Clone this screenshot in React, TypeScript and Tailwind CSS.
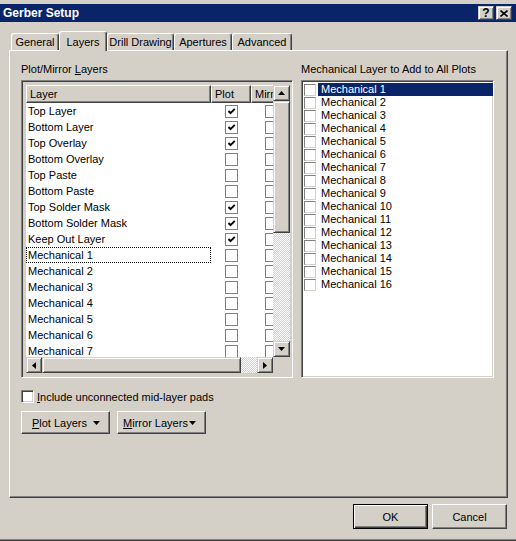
import React from "react";

// classic 3D bevels
const raised =
  "border border-t-white border-l-white border-r-[#404040] border-b-[#404040] shadow-[inset_-1px_-1px_#808080]";
const sunken =
  "border border-t-[#808080] border-l-[#808080] border-r-white border-b-white shadow-[inset_1px_1px_#404040,inset_-1px_-1px_#d4d0c8]";
const scrollBtn =
  "border border-t-[#d4d0c8] border-l-[#d4d0c8] border-r-[#404040] border-b-[#404040] shadow-[inset_1px_1px_#ffffff,inset_-1px_-1px_#808080] bg-[#d4d0c8]";
const checker =
  "bg-[image:repeating-conic-gradient(#d4d0c8_0%_25%,#ffffff_0%_50%)] bg-[length:2px_2px]";

const TABS = [
  { label: "General", cls: "w-[48px]" },
  { label: "Layers", cls: "w-[48px]", active: true },
  { label: "Drill Drawing", cls: "w-[67px]" },
  { label: "Apertures", cls: "w-[58px]" },
  { label: "Advanced", cls: "w-[60px]" },
];

const LAYERS = [
  { name: "Top Layer", plot: true },
  { name: "Bottom Layer", plot: true },
  { name: "Top Overlay", plot: true },
  { name: "Bottom Overlay", plot: false },
  { name: "Top Paste", plot: false },
  { name: "Bottom Paste", plot: false },
  { name: "Top Solder Mask", plot: true },
  { name: "Bottom Solder Mask", plot: true },
  { name: "Keep Out Layer", plot: true },
  { name: "Mechanical 1", plot: false, focus: true },
  { name: "Mechanical 2", plot: false },
  { name: "Mechanical 3", plot: false },
  { name: "Mechanical 4", plot: false },
  { name: "Mechanical 5", plot: false },
  { name: "Mechanical 6", plot: false },
  { name: "Mechanical 7", plot: false },
];

const MECH = Array.from({ length: 16 }, (_, i) => i + 1);

type Dir = "up" | "down" | "left" | "right";

const Arrow = ({ dir }: { dir: Dir }) => {
  const pts = {
    up: "0,4 3.5,0 7,4",
    down: "0,0 3.5,4 7,0",
    left: "4,0 0,3.5 4,7",
    right: "0,0 4,3.5 0,7",
  }[dir];
  const vertical = dir === "up" || dir === "down";
  return (
    <svg width={vertical ? 7 : 4} height={vertical ? 4 : 7} className="block">
      <polygon points={pts} fill="#000" />
    </svg>
  );
};

const ListCheck = ({ checked }: { checked?: boolean }) => (
  <div className="w-[13px] h-[13px] shrink-0 border border-[#808080] bg-white flex items-center justify-center">
    {checked && (
      <svg width="9" height="9" viewBox="0 0 9 9" className="block">
        <path d="M1.5 4 L3.5 6.2 L7.8 1.8" stroke="#000" strokeWidth="1.9" fill="none" />
      </svg>
    )}
  </div>
);

const TitleButton = ({ children }: { children: React.ReactNode }) => (
  <div className={`w-[16px] h-[14px] flex items-center justify-center ${scrollBtn}`}>{children}</div>
);

const DropButton = ({ label, mnemonic }: { label: string; mnemonic: string }) => (
  <div className={`w-[89px] h-[23px] bg-[#d4d0c8] flex items-center ${raised}`}>
    <span className="flex-1 text-center pl-[4px]">
      <span className="underline underline-offset-[1px]">{mnemonic}</span>
      {label}
    </span>
    <div className="mr-[9px]">
      <Arrow dir="down" />
    </div>
  </div>
);

const LayerList = () => (
  <div className={`w-[272px] h-[298px] pl-[4px] pt-[4px] pr-[2px] pb-[4px] ${sunken}`}>
    <div className="w-full h-full flex flex-col bg-white">
      <div className="flex h-[272px]">
        <div className="w-[247px] overflow-hidden">
          <div className="flex h-[18px] w-[265px]">
            <div className={`w-[185px] shrink-0 flex items-center pl-[3px] bg-[#d4d0c8] ${raised}`}>Layer</div>
            <div className={`w-[40px] shrink-0 flex items-center pl-[3px] bg-[#d4d0c8] ${raised}`}>Plot</div>
            <div className={`w-[40px] shrink-0 flex items-center pl-[3px] bg-[#d4d0c8] ${raised}`}>Mirror</div>
          </div>
          {LAYERS.map((l) => (
            <div key={l.name} className="flex h-[16px] w-[265px]">
              <div
                className={`w-[185px] shrink-0 flex items-center ${
                  l.focus ? "border border-dotted border-black pl-[1px]" : "pl-[2px]"
                }`}
              >
                {l.name}
              </div>
              <div className="w-[40px] shrink-0 flex items-center justify-center">
                <ListCheck checked={l.plot} />
              </div>
              <div className="w-[40px] shrink-0 flex items-center justify-center">
                <ListCheck />
              </div>
            </div>
          ))}
        </div>
        <div className="w-[17px] flex flex-col">
          <div className={`h-[16px] flex items-center justify-center ${scrollBtn}`}>
            <Arrow dir="up" />
          </div>
          <div className={`h-[132px] ${scrollBtn}`} />
          <div className={`flex-1 ${checker}`} />
          <div className={`h-[16px] flex items-center justify-center ${scrollBtn}`}>
            <Arrow dir="down" />
          </div>
        </div>
      </div>
      <div className="flex h-[16px]">
        <div className={`w-[16px] flex items-center justify-center ${scrollBtn}`}>
          <Arrow dir="left" />
        </div>
        <div className={`w-[199px] ${scrollBtn}`} />
        <div className={`w-[16px] ${checker}`} />
        <div className={`w-[16px] flex items-center justify-center ${scrollBtn}`}>
          <Arrow dir="right" />
        </div>
        <div className="w-[17px] bg-[#d4d0c8]" />
      </div>
    </div>
  </div>
);

const MechList = () => (
  <div className={`w-[193px] h-[298px] bg-white pt-[2px] pl-[2px] ${sunken}`}>
    {MECH.map((n) => (
      <div key={n} className="flex items-center h-[13px]">
        <div className="w-[12px] h-[12px] shrink-0 bg-white border border-t-[#808080] border-l-[#808080] border-r-[#d4d0c8] border-b-[#d4d0c8]" />
        <div
          className={`ml-[2px] flex-1 h-full pl-[3px] leading-[13px] ${
            n === 1 ? "bg-[#0a246a] text-white" : ""
          }`}
        >
          Mechanical {n}
        </div>
      </div>
    ))}
  </div>
);

export default function App() {
  return (
    <div className="w-[516px] h-[541px] bg-[#d4d0c8] flex flex-col overflow-hidden text-[11px] leading-[14px] text-black font-['Liberation_Sans',Arial,sans-serif] select-none">
      <div className="h-[4px] shrink-0" />

      {/* title bar */}
      <div className="h-[18px] shrink-0 bg-[#0a246a] flex items-center justify-between pl-[3px] pr-[4px]">
        <span className="text-white font-bold text-[12px]">Gerber Setup</span>
        <div className="flex gap-[2px]">
          <TitleButton>
            <span className="font-bold text-[12px] leading-none">?</span>
          </TitleButton>
          <TitleButton>
            <svg width="8" height="7" viewBox="0 0 8 7" className="block">
              <path d="M0.5 0.5 L7.5 6.5 M7.5 0.5 L0.5 6.5" stroke="#000" strokeWidth="1.6" />
            </svg>
          </TitleButton>
        </div>
      </div>

      <div className="h-[9px] shrink-0" />

      {/* tabs */}
      <div className="h-[19px] shrink-0 flex items-end ml-[11px]">
        {TABS.map((t) =>
          t.active ? (
            <div
              key={t.label}
              className={`${t.cls} relative z-10 self-start h-[20px] bg-[#d4d0c8] rounded-t-[3px] border border-b-0 border-t-white border-l-white border-r-[#404040] shadow-[inset_-1px_0_#808080] flex items-center justify-center`}
            >
              {t.label}
            </div>
          ) : (
            <div
              key={t.label}
              className={`${t.cls} h-[17px] rounded-t-[3px] border border-b-0 border-t-white border-l-white border-r-[#404040] shadow-[inset_-1px_0_#808080] flex items-center justify-center`}
            >
              {t.label}
            </div>
          )
        )}
      </div>

      {/* Layers page */}
      <div className="ml-[9px] w-[499px] h-[448px] shrink-0 pl-[11px] pt-[11px] border border-t-white border-l-white border-r-[#404040] border-b-[#404040] shadow-[inset_-1px_-1px_#808080]">
        <div className="flex gap-[8px]">
          <div className="flex flex-col">
            <div className="h-[14px] mb-[4px]">
              Plot/Mirror <span className="underline underline-offset-[1px]">L</span>ayers
            </div>
            <LayerList />
          </div>
          <div className="flex flex-col">
            <div className="h-[14px] mb-[4px]">Mechanical Layer to Add to All Plots</div>
            <MechList />
          </div>
        </div>

        <div className="mt-[12px] flex items-center gap-[3px] h-[13px]">
          <div className={`w-[13px] h-[13px] bg-white ${sunken}`} />
          <span>
            <span className="underline underline-offset-[1px]">I</span>nclude unconnected mid-layer pads
          </span>
        </div>

        <div className="mt-[8px] flex gap-[7px]">
          <DropButton mnemonic="P" label="lot Layers" />
          <DropButton mnemonic="M" label="irror Layers" />
        </div>
      </div>

      {/* dialog buttons */}
      <div className="mt-[6px] flex justify-end gap-[4px] pr-[9px]">
        <div className="w-[75px] h-[25px] flex items-center justify-center border border-black shadow-[inset_1px_1px_#ffffff,inset_-1px_-1px_#404040,inset_-2px_-2px_#808080]">
          OK
        </div>
        <div className={`w-[75px] h-[25px] flex items-center justify-center ${raised}`}>Cancel</div>
      </div>

      <div className="mt-auto h-[1px] bg-[#808080]" />
      <div className="h-[1px] bg-[#404040]" />
    </div>
  );
}
